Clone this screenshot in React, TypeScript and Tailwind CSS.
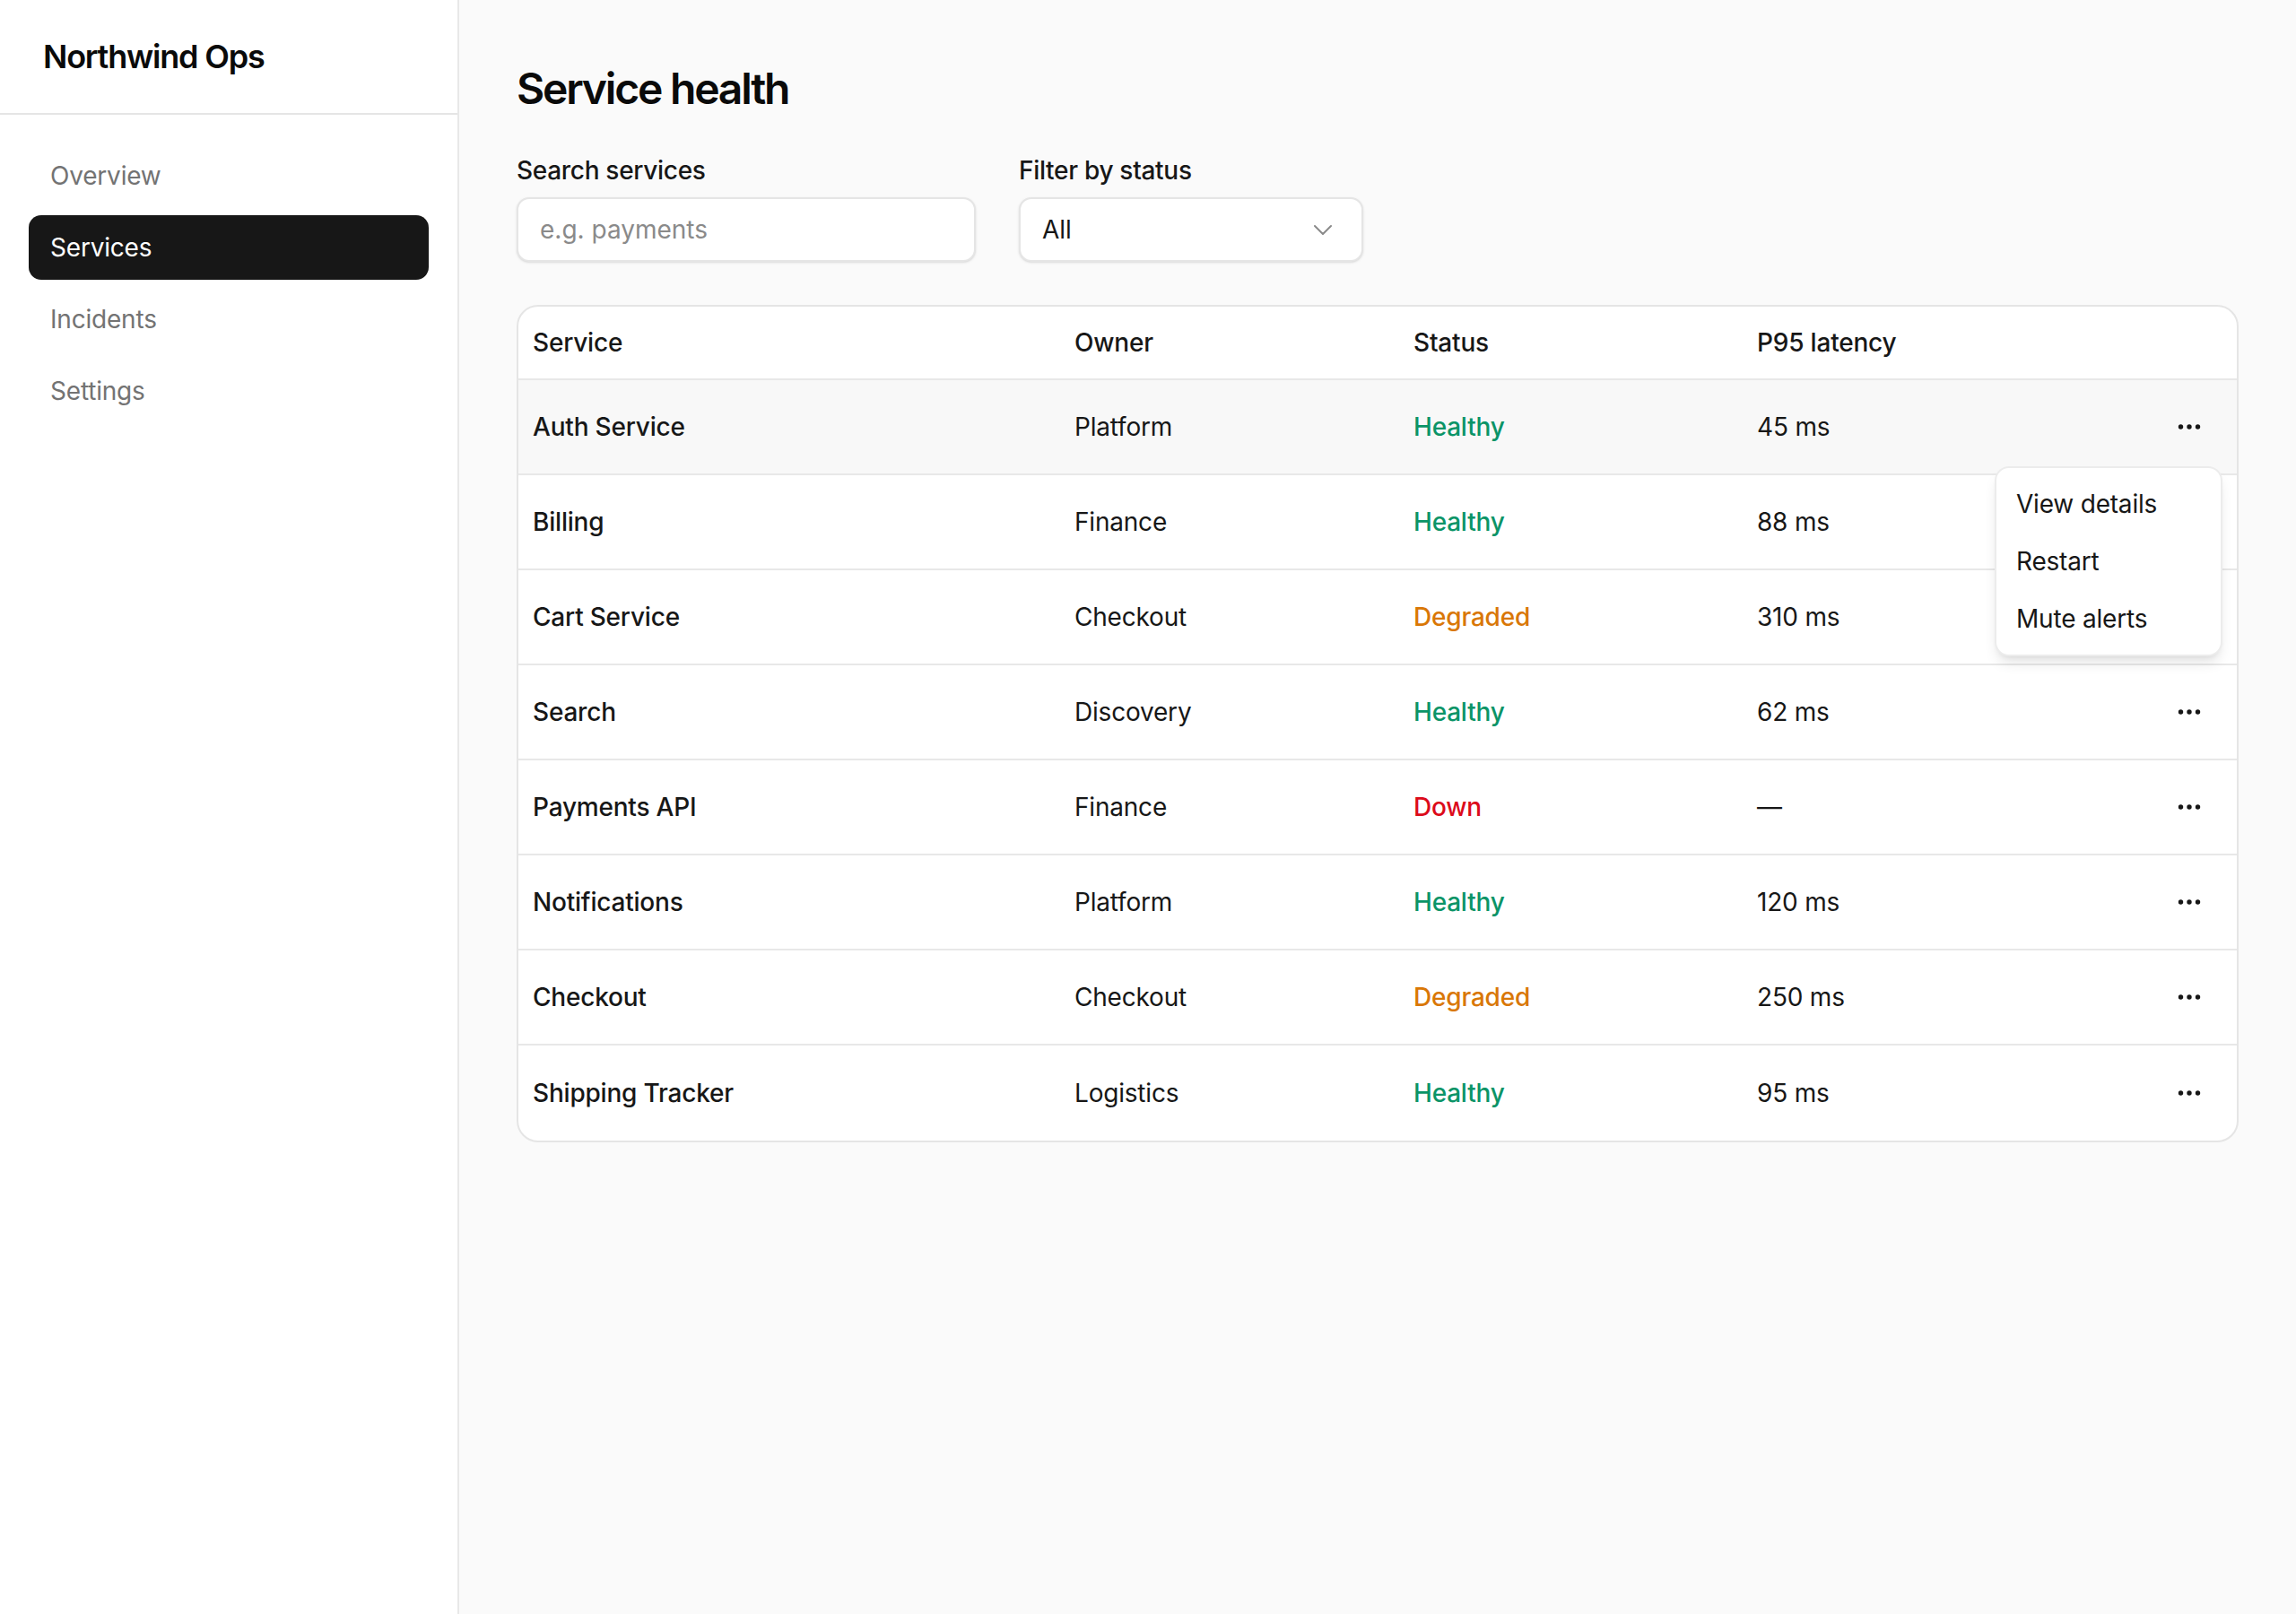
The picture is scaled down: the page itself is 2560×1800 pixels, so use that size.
import React from 'react';

type Status = 'Healthy' | 'Degraded' | 'Down';

const services: { name: string; owner: string; status: Status; latency: string }[] = [
    { name: 'Auth Service', owner: 'Platform', status: 'Healthy', latency: '45 ms' },
    { name: 'Billing', owner: 'Finance', status: 'Healthy', latency: '88 ms' },
    { name: 'Cart Service', owner: 'Checkout', status: 'Degraded', latency: '310 ms' },
    { name: 'Search', owner: 'Discovery', status: 'Healthy', latency: '62 ms' },
    { name: 'Payments API', owner: 'Finance', status: 'Down', latency: '—' },
    { name: 'Notifications', owner: 'Platform', status: 'Healthy', latency: '120 ms' },
    { name: 'Checkout', owner: 'Checkout', status: 'Degraded', latency: '250 ms' },
    { name: 'Shipping Tracker', owner: 'Logistics', status: 'Healthy', latency: '95 ms' },
];

const statusColor: Record<Status, string> = {
    Healthy: 'text-[#0b9467]',
    Degraded: 'text-[#d97706]',
    Down: 'text-[#dc0a1a]',
};

const navItems = ['Overview', 'Services', 'Incidents', 'Settings'];

const cols = 'grid grid-cols-[604px_378px_383px_1fr_120px] items-center';

const Dots: React.FC = () => (
    <svg width="26" height="8" viewBox="0 0 26 8" fill="#171717">
        <circle cx="3.5" cy="4" r="2.7" />
        <circle cx="13" cy="4" r="2.7" />
        <circle cx="22.5" cy="4" r="2.7" />
    </svg>
);

const Sidebar: React.FC = () => (
    <aside className="w-[512px] shrink-0 bg-white border-r-2 border-[#e8e8e8]">
        <div className="h-[128px] px-[48px] flex items-center border-b-2 border-[#e5e5e5]">
            <span className="text-[36px] font-semibold tracking-[-1.2px] text-[#0a0a0a]">Northwind Ops</span>
        </div>
        <nav className="px-[32px] pt-[32px] flex flex-col gap-[8px]">
            {navItems.map(item => (
                <div
                    key={item}
                    className={
                        item === 'Services'
                            ? 'h-[72px] px-[24px] flex items-center rounded-[14px] bg-[#171717] text-white text-[28px] tracking-[-0.2px]'
                            : 'h-[72px] px-[24px] flex items-center rounded-[14px] text-[#737373] text-[28px] tracking-[-0.2px]'
                    }
                >
                    {item}
                </div>
            ))}
        </nav>
    </aside>
);

const RowMenu: React.FC = () => (
    <div className="absolute z-10 top-[96px] right-[16px] w-[254px] p-[8px] bg-white border-2 border-[#ececec] rounded-[16px] shadow-lg">
        {['View details', 'Restart', 'Mute alerts'].map(label => (
            <div key={label} className="h-[64px] px-[14px] flex items-center text-[28px] tracking-[-0.2px] text-[#171717]">
                {label}
            </div>
        ))}
    </div>
);

export default function App() {
    return (
        <div className="min-h-screen flex bg-[#fafafa] font-['Inter',sans-serif] text-[#171717]">
            <Sidebar />
            <main className="flex-1 px-[64px] pt-[67px] pb-[64px]">
                <h1 className="text-[48px] leading-[64px] font-semibold tracking-[-2.2px] text-[#0a0a0a]">Service health</h1>

                <div className="mt-[39px] flex gap-[48px]">
                    <label className="flex flex-col">
                        <span className="text-[28px] leading-[40px] font-medium tracking-[-0.3px] mb-[10px]">Search services</span>
                        <div className="w-[512px] h-[72px] px-[24px] flex items-center bg-white border-2 border-[#e5e5e5] rounded-[14px] shadow-sm">
                            <span className="text-[28px] text-[#8a8a8a]">e.g. payments</span>
                        </div>
                    </label>
                    <label className="flex flex-col">
                        <span className="text-[28px] leading-[40px] font-medium tracking-[-0.3px] mb-[10px]">Filter by status</span>
                        <div className="w-[384px] h-[72px] pl-[24px] pr-[32px] flex items-center justify-between bg-white border-2 border-[#e5e5e5] rounded-[14px] shadow-sm">
                            <span className="text-[28px]">All</span>
                            <svg width="22" height="12" viewBox="0 0 22 12" fill="none" stroke="#8a8a8a" strokeWidth="2" strokeLinecap="round" strokeLinejoin="round">
                                <path d="M2 2l9 9 9-9" />
                            </svg>
                        </div>
                    </label>
                </div>

                <div className="mt-[48px] bg-white border-2 border-[#e5e5e5] rounded-[24px] overflow-hidden">
                    <div className={`${cols} h-[82px] border-b-2 border-[#e8e8e8] text-[28px] font-medium tracking-[-0.2px]`}>
                        <div className="px-[16px]">Service</div>
                        <div className="px-[16px]">Owner</div>
                        <div className="px-[16px]">Status</div>
                        <div className="px-[16px]">P95 latency</div>
                        <div />
                    </div>
                    {services.map((s, i) => (
                        <div
                            key={s.name}
                            className={`${cols} relative h-[106px] text-[28px] tracking-[-0.2px] ${i < services.length - 1 ? 'border-b-2 border-[#e8e8e8]' : ''} ${i === 0 ? 'bg-[#f8f8f8]' : ''}`}
                        >
                            <div className="px-[16px] font-medium">{s.name}</div>
                            <div className="px-[16px]">{s.owner}</div>
                            <div className={`px-[16px] font-medium ${statusColor[s.status]}`}>{s.status}</div>
                            <div className="px-[16px]">{s.latency}</div>
                            <div className="flex justify-end pr-[40px]">
                                {i !== 1 && i !== 2 && <Dots />}
                            </div>
                            {i === 0 && <RowMenu />}
                        </div>
                    ))}
                </div>
            </main>
        </div>
    );
}
